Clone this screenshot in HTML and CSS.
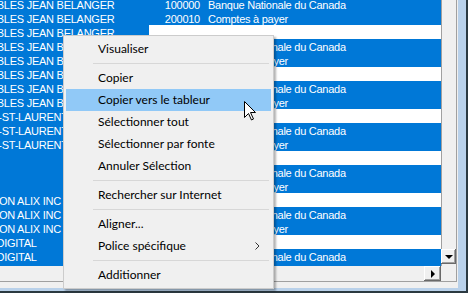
FILE: index.html
```html
<!doctype html>
<html lang="fr">
<head>
    <meta charset="utf-8">
    <title>Grille - menu contextuel</title>
    <link rel="stylesheet" href="styles.css">
</head>

<body>
<!-- Fenêtre avec la grille -->
<div class="frame">
    <div class="frame-inner">
        <div class="client">
            <div class="grid-area">
                <div class="grid-view">
                    <div class="grid">
                        <div class="row"><span class="c-name">MEUBLES JEAN BELANGER</span><span class="c-num">100000</span><span class="c-desc">Banque Nationale du Canada</span></div>
                        <div class="row"><span class="c-name">MEUBLES JEAN BELANGER</span><span class="c-num">200010</span><span class="c-desc">Comptes à payer</span></div>
                        <div class="row blank"><span class="c-name">MEUBLES JEAN BELANGER</span><span class="c-num"></span><span class="c-desc"></span></div>
                        <div class="row"><span class="c-name">MEUBLES JEAN BELANGER</span><span class="c-num">100000</span><span class="c-desc">Banque Nationale du Canada</span></div>
                        <div class="row"><span class="c-name">MEUBLES JEAN BELANGER</span><span class="c-num">200010</span><span class="c-desc">Comptes à payer</span></div>
                        <div class="row blank"><span class="c-name">MEUBLES JEAN BELANGER</span><span class="c-num"></span><span class="c-desc"></span></div>
                        <div class="row"><span class="c-name">MEUBLES JEAN BELANGER</span><span class="c-num">100000</span><span class="c-desc">Banque Nationale du Canada</span></div>
                        <div class="row"><span class="c-name">MEUBLES JEAN BELANGER</span><span class="c-num">200010</span><span class="c-desc">Comptes à payer</span></div>
                        <div class="row blank"><span class="c-name">BOIS-ST-LAURENT</span><span class="c-num"></span><span class="c-desc"></span></div>
                        <div class="row"><span class="c-name">BOIS-ST-LAURENT</span><span class="c-num">100000</span><span class="c-desc">Banque Nationale du Canada</span></div>
                        <div class="row"><span class="c-name">BOIS-ST-LAURENT</span><span class="c-num">200010</span><span class="c-desc">Comptes à payer</span></div>
                        <div class="row blank"><span class="c-name"></span><span class="c-num"></span><span class="c-desc"></span></div>
                        <div class="row"><span class="c-name"></span><span class="c-num">100000</span><span class="c-desc">Banque Nationale du Canada</span></div>
                        <div class="row"><span class="c-name"></span><span class="c-num">200010</span><span class="c-desc">Comptes à payer</span></div>
                        <div class="row blank"><span class="c-name">MAISON ALIX INC</span><span class="c-num"></span><span class="c-desc"></span></div>
                        <div class="row"><span class="c-name">MAISON ALIX INC</span><span class="c-num">100000</span><span class="c-desc">Banque Nationale du Canada</span></div>
                        <div class="row"><span class="c-name">MAISON ALIX INC</span><span class="c-num">200010</span><span class="c-desc">Comptes à payer</span></div>
                        <div class="row blank"><span class="c-name">ETS DIGITAL</span><span class="c-num"></span><span class="c-desc"></span></div>
                        <div class="row"><span class="c-name">ETS DIGITAL</span><span class="c-num">100000</span><span class="c-desc">Banque Nationale du Canada</span></div>
                        <div class="row"><span class="c-name"></span><span class="c-num">200010</span><span class="c-desc">Comptes à payer</span></div>
                    </div>
                </div>
                <div class="vscroll">
                    <div class="track"></div>
                    <div class="sb-btn"><span class="arrow-down"></span></div>
                </div>
            </div>
            <div class="hscroll-row">
                <div class="hscroll">
                    <div class="track"></div>
                    <div class="sb-btn wide"><span class="arrow-right"></span></div>
                </div>
                <div class="corner"></div>
            </div>
        </div>
    </div>
</div>

<!-- Menu contextuel -->
<div class="ctx-menu">
    <div class="item">Visualiser</div>
    <div class="sep"></div>
    <div class="item">Copier</div>
    <div class="item hover">Copier vers le tableur</div>
    <div class="item">Sélectionner tout</div>
    <div class="item">Sélectionner par fonte</div>
    <div class="item">Annuler Sélection</div>
    <div class="sep"></div>
    <div class="item">Rechercher sur Internet</div>
    <div class="sep"></div>
    <div class="item">Aligner...</div>
    <div class="item">Police spécifique
        <svg class="sub-arrow" width="5" height="8" viewBox="0 0 5 8"><polyline points="0.5,0.5 4,4 0.5,7.5" fill="none" stroke="#333" stroke-width="1"/></svg>
    </div>
    <div class="sep"></div>
    <div class="item">Additionner</div>
</div>

<!-- Pointeur de souris -->
<svg class="cursor" width="13" height="20" viewBox="0 0 13 20">
    <path d="M0.5,0.5 L0.5,16.5 L4.5,12.5 L7.5,19 L9.5,18 L6.5,11.5 L11.5,11.5 Z" fill="#fff" stroke="#000" stroke-width="1" stroke-linejoin="miter"/>
</svg>
</body>
</html>
```

FILE: styles.css
```css
/* Fenêtre */
* {
    box-sizing: border-box;
}

body {
    margin: 0;
    width: 468px;
    height: 293px;
    overflow: hidden;
    position: relative;
    background: #f0f0f0;
}

.frame {
    width: 468px;
    height: 293px;
    background: #b9d1ea;
    border-right: 2px solid #2b3940;
    border-bottom: 2px solid #2b3940;
    padding-right: 8px;
    padding-bottom: 3px;
}

.frame-inner {
    height: 100%;
    background: #f0f0f0;
    padding-right: 1px;
    padding-bottom: 6px;
}

.client {
    height: 100%;
    border-right: 1px solid #a0a0a0;
    border-bottom: 1px solid #a0a0a0;
    display: flex;
    flex-direction: column;
}

/* Grille */
.grid-area {
    display: flex;
    height: 266px;
}

.grid-view {
    width: 441px;
    height: 266px;
    overflow: hidden;
    background: #fff;
}

.grid {
    width: 468px;
    margin-left: -27px;
    margin-top: -3px;
    font-family: "Liberation Sans", Arial, sans-serif;
    font-size: 11px;
    letter-spacing: -0.25px;
    color: #fff;
}

.row {
    display: grid;
    grid-template-columns: 176px 55px 1fr;
    height: 14px;
    background: #0078d7;
}

.row span {
    height: 14px;
    line-height: 14px;
    padding-top: 1px;
    white-space: nowrap;
    overflow: hidden;
}

.c-num {
    text-align: right;
    padding-right: 4px;
}

.c-desc {
    padding-left: 4px;
}

.row.blank .c-num,
.row.blank .c-desc {
    background: #fff;
}

/* Barres de défilement */
.vscroll {
    width: 15px;
    border-left: 1px solid #a0a0a0;
    display: flex;
    flex-direction: column;
}

.track {
    flex: 1;
    background: #f0f0f0;
}

.sb-btn {
    width: 15px;
    height: 15px;
    margin-bottom: 2px;
    margin-left: -1px;
    background: #f0f0f0;
    box-shadow: inset -1px -1px #696969, inset 1px 1px #fff, inset -2px -2px #a0a0a0;
    display: flex;
    align-items: center;
    justify-content: center;
}

.hscroll-row {
    display: flex;
    height: 15px;
}

.hscroll {
    width: 441px;
    display: flex;
}

.hscroll .sb-btn {
    margin: 0;
}

.sb-btn.wide {
    width: 17px;
}

.corner {
    flex: 1;
    background: #f0f0f0;
}

.arrow-down {
    width: 0;
    height: 0;
    border-left: 4px solid transparent;
    border-right: 4px solid transparent;
    border-top: 4px solid #000;
    margin-top: 1px;
}

.arrow-right {
    width: 0;
    height: 0;
    border-top: 4px solid transparent;
    border-bottom: 4px solid transparent;
    border-left: 4px solid #000;
}

/* Menu contextuel */
.ctx-menu {
    position: absolute;
    left: 63px;
    top: 35px;
    width: 211px;
    padding: 2px;
    background: #f0f0f0;
    border: 1px solid #cccccc;
    box-shadow: 2px 2px 2px rgba(0, 0, 0, 0.3);
    font-family: Lato, "Noto Sans", sans-serif;
    font-size: 12px;
    color: #000;
}

.item {
    height: 22px;
    line-height: 22px;
    padding-left: 32px;
    position: relative;
}

.item.hover {
    background: #91c9f7;
}

.sub-arrow {
    position: absolute;
    right: 11px;
    top: 7px;
}

.sep {
    height: 7px;
    padding-top: 3px;
    margin-left: 27px;
    margin-right: 2px;
}

.sep::after {
    content: "";
    display: block;
    height: 1px;
    background: #d7d7d7;
}

.cursor {
    position: absolute;
    left: 244px;
    top: 101px;
}
```
